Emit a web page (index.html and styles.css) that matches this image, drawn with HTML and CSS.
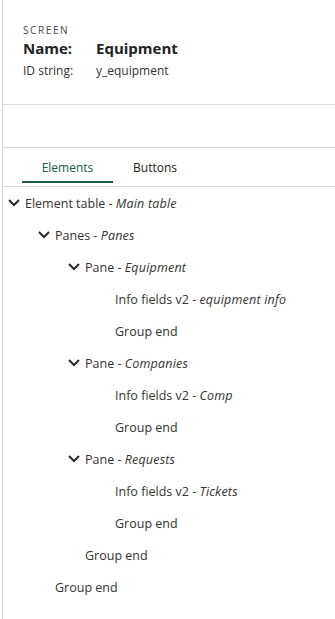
FILE: index.html
```html
<!DOCTYPE html>
<html lang="en">
<head>
    <meta charset="UTF-8">
    <meta name="viewport" content="width=device-width, initial-scale=1.0">
    <title>Screen - Equipment</title>
    <link rel="stylesheet" href="styles.css">
</head>
<body>
    <div class="panel">
        <header class="screen-info">
            <small class="screen-label">SCREEN</small>
            <div class="screen-row screen-name">
                <span class="key">Name:</span>
                <span class="value">Equipment</span>
            </div>
            <div class="screen-row screen-id">
                <span class="key">ID string:</span>
                <span class="value">y_equipment</span>
            </div>
        </header>

        <div class="spacer"></div>

        <nav class="tabs">
            <a class="tab active">Elements</a>
            <a class="tab">Buttons</a>
        </nav>

        <ul class="tree">
            <li class="node lvl-0"><svg class="chev" viewBox="0 0 12 8"><polyline points="1,1 6,6 11,1"/></svg><span>Element table - <em>Main table</em></span></li>
            <li class="node lvl-1"><svg class="chev" viewBox="0 0 12 8"><polyline points="1,1 6,6 11,1"/></svg><span>Panes - <em>Panes</em></span></li>
            <li class="node lvl-2"><svg class="chev" viewBox="0 0 12 8"><polyline points="1,1 6,6 11,1"/></svg><span>Pane - <em>Equipment</em></span></li>
            <li class="node lvl-3 leaf"><span>Info fields v2 - <em>equipment info</em></span></li>
            <li class="node lvl-3 leaf"><span>Group end</span></li>
            <li class="node lvl-2"><svg class="chev" viewBox="0 0 12 8"><polyline points="1,1 6,6 11,1"/></svg><span>Pane - <em>Companies</em></span></li>
            <li class="node lvl-3 leaf"><span>Info fields v2 - <em>Comp</em></span></li>
            <li class="node lvl-3 leaf"><span>Group end</span></li>
            <li class="node lvl-2"><svg class="chev" viewBox="0 0 12 8"><polyline points="1,1 6,6 11,1"/></svg><span>Pane - <em>Requests</em></span></li>
            <li class="node lvl-3 leaf"><span>Info fields v2 - <em>Tickets</em></span></li>
            <li class="node lvl-3 leaf"><span>Group end</span></li>
            <li class="node lvl-2 leaf"><span>Group end</span></li>
            <li class="node lvl-1 leaf"><span>Group end</span></li>
        </ul>
    </div>
</body>
</html>
```

FILE: styles.css
```css
html{
    box-sizing: border-box;
    font-family: 'Open Sans', 'Noto Sans', sans-serif;
    font-size: 12px;
    color: #333;
}

*,
*:after,
*:before{
    box-sizing: inherit;
}

body{
    margin: 0;
    background-color: #fff;
}

.panel{
    margin-left: 2px;
    min-height: 619px;
    border-left: 1px solid #d4d4d4;
}

/* cabecera de la pantalla */
.screen-info{
    height: 105px;
    padding: 23px 20px 0;
    border-bottom: 1px solid #d9d9d9;
}

.screen-label{
    display: block;
    font-size: 10px;
    letter-spacing: 1.6px;
    line-height: 14px;
    color: #444;
}

.screen-row{
    display: flex;
}

.screen-row .key{
    width: 73px;
}

.screen-name{
    font-size: 15px;
    font-weight: 700;
    line-height: 22px;
    color: #222;
}

.screen-id{
    margin-top: 3px;
    font-size: 12px;
    line-height: 18px;
}

.spacer{
    height: 43px;
    border-bottom: 1px solid #d9d9d9;
}

/* pestañas */
.tabs{
    display: flex;
    padding-left: 19px;
    border-bottom: 1px solid #d9d9d9;
}

.tab{
    width: 91px;
    padding: 11px 0 4px;
    text-align: center;
    font-size: 12px;
    line-height: 18px;
    color: #222;
    border-bottom: 2px solid transparent;
    margin-bottom: 3px;
}

.tab + .tab{
    width: 84px;
}

.tab.active{
    color: #1c5a50;
    border-bottom-color: #1c5a50;
}

/* arbol de elementos */
.tree{
    list-style: none;
    margin: 0;
    padding: 0;
    font-size: 12.5px;
}

.node{
    display: flex;
    align-items: center;
    height: 32px;
    white-space: nowrap;
}

.node em{
    letter-spacing: .2px;
}

.chev{
    flex: none;
    width: 12px;
    height: 8px;
    margin-right: 5px;
    fill: none;
    stroke: #2a2a2a;
    stroke-width: 2;
}

.lvl-0{ padding-left: 5px; }
.lvl-1{ padding-left: 35px; }
.lvl-2{ padding-left: 65px; }
.lvl-3{ padding-left: 95px; }

.leaf{ margin-left: 17px; }
```
